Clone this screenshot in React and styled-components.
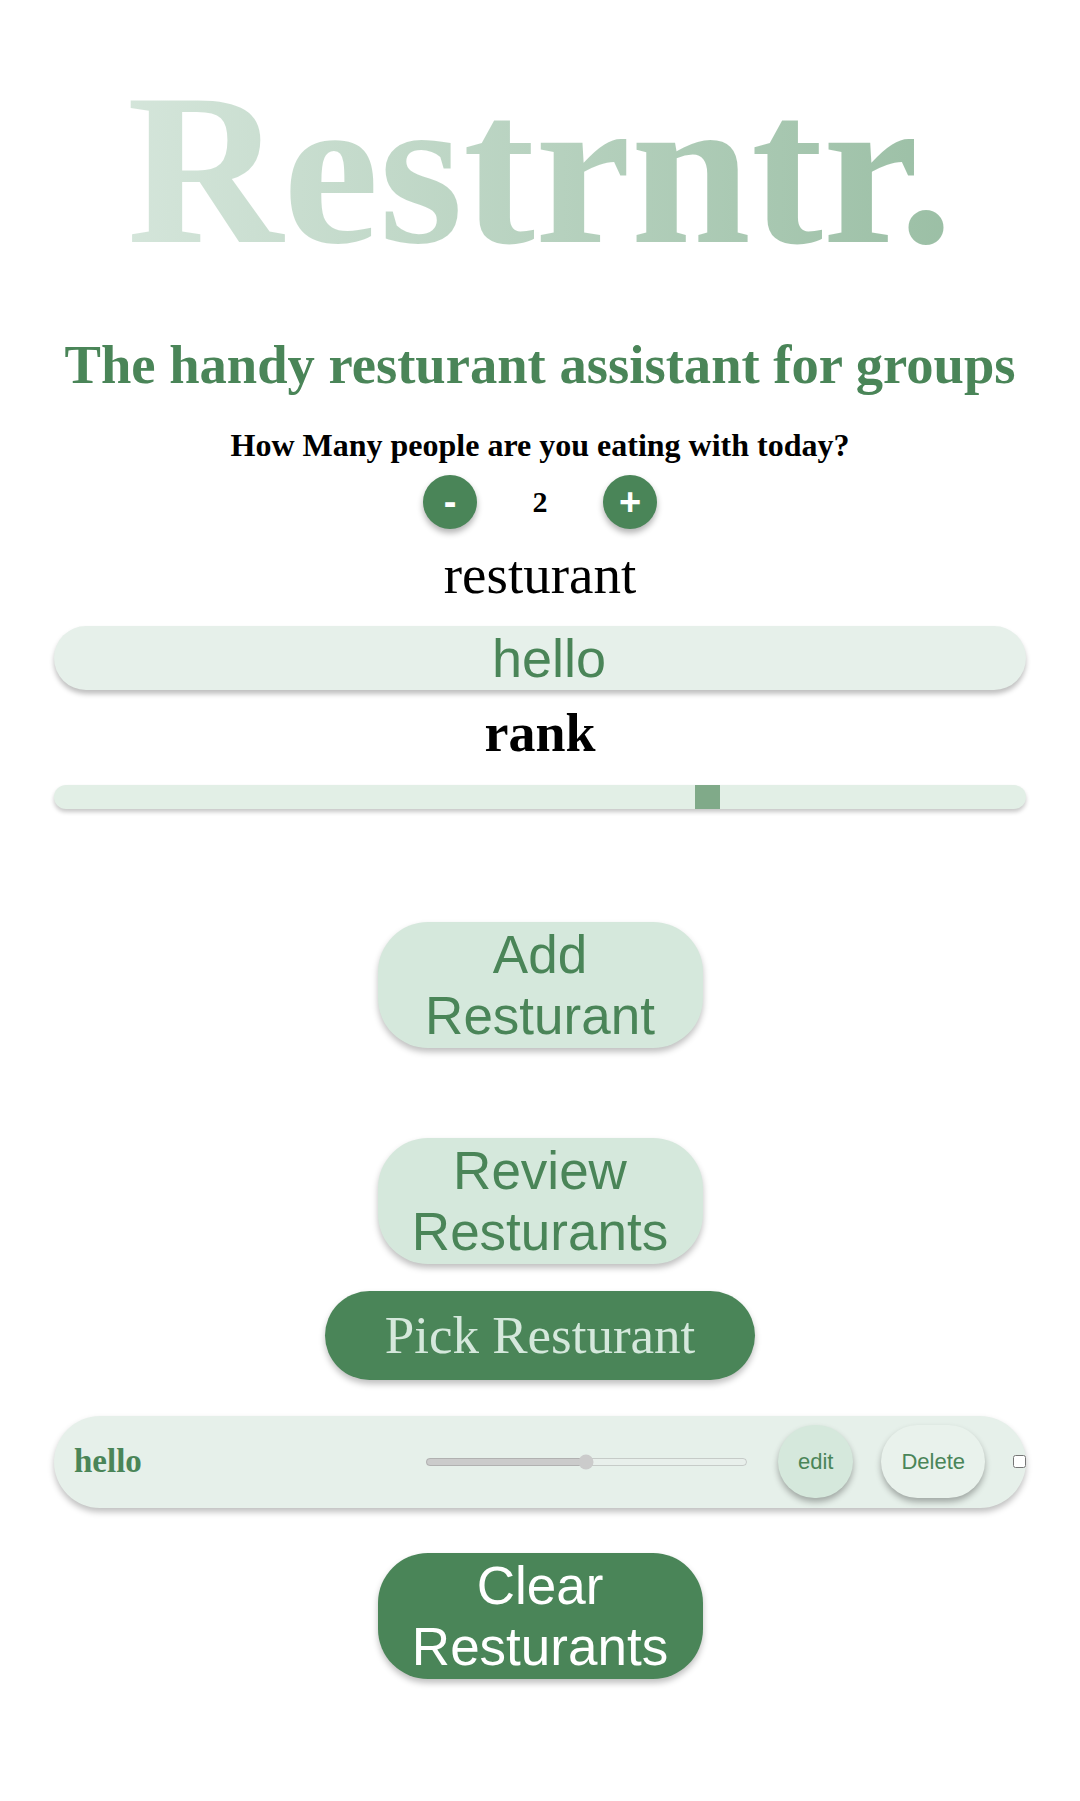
import React from "react";
import styled, { createGlobalStyle } from "styled-components";

const GREEN = "#4a8558";
const MINT = "#d5e8dc";
const PALE = "#e6f0ea";

const GlobalStyle = createGlobalStyle`
  html, body {
    margin: 0;
    padding: 0;
    background: #ffffff;
  }
  body {
    font-family: "Liberation Serif", "Times New Roman", serif;
    color: #000;
  }
`;

export default function App() {
  return (
    <>
      <GlobalStyle />
      <Page>
        <Brand>Restrntr.</Brand>
        <Tagline>The handy resturant assistant for groups</Tagline>
        <Question>How Many people are you eating with today?</Question>
        <Counter>
          <RoundButton>-</RoundButton>
          <Count>2</Count>
          <RoundButton>+</RoundButton>
        </Counter>
        <FieldLabel>resturant</FieldLabel>
        <NameInput defaultValue="hello" />
        <FieldLabel $bold>rank</FieldLabel>
        <RankSlider type="range" min="0" max="10" step="0.01" defaultValue="6.77" />
        <PillButton $gap={113}>Add Resturant</PillButton>
        <PillButton $gap={90}>Review Resturants</PillButton>
        <PickButton>Pick Resturant</PickButton>
        <Card>
          <CardName>hello</CardName>
          <CardRange type="range" min="0" max="10" defaultValue="5" disabled />
          <SmallButton>edit</SmallButton>
          <SmallButton $light>Delete</SmallButton>
          <CardCheck type="checkbox" />
        </Card>
        <PillButton $gap={45} $dark>Clear Resturants</PillButton>
        <Spacer />
      </Page>
    </>
  );
}

const Page = styled.main`
  width: 90%;
  margin: 0 auto;
  display: flex;
  flex-direction: column;
  align-items: center;
`;

const Brand = styled.h1`
  margin: 62px 0 0;
  font-size: 216px;
  line-height: 1;
  font-weight: 700;
  background: linear-gradient(to right, #d4e5da, #9bbfa5);
  -webkit-background-clip: text;
  background-clip: text;
  color: transparent;
`;

const Tagline = styled.h2`
  margin: 56px 0 0;
  font-size: 54.6px;
  line-height: 1.15;
  font-weight: 700;
  color: ${GREEN};
  white-space: nowrap;
`;

const Question = styled.p`
  margin: 30px 0 0;
  font-size: 32px;
  line-height: 1.15;
  font-weight: 700;
`;

const Counter = styled.div`
  margin-top: 11px;
  display: flex;
  align-items: center;
  gap: 53px;
`;

const RoundButton = styled.button`
  width: 54px;
  height: 54px;
  padding: 0;
  border: none;
  border-radius: 50%;
  background: ${GREEN};
  color: #fff;
  font-family: "Liberation Sans", Arial, sans-serif;
  font-size: 38px;
  font-weight: 700;
  line-height: 1;
  box-shadow: 0 4px 6px rgba(0, 0, 0, 0.3);
`;

const Count = styled.span`
  min-width: 20px;
  text-align: center;
  font-size: 30px;
  font-weight: 700;
`;

const FieldLabel = styled.label`
  margin-top: ${(p) => (p.$bold ? 12 : 14)}px;
  font-size: ${(p) => (p.$bold ? 54 : 55)}px;
  line-height: 1.15;
  font-weight: ${(p) => (p.$bold ? 700 : 400)};
`;

const NameInput = styled.input`
  box-sizing: border-box;
  margin-top: 20px;
  width: 100%;
  height: 64px;
  padding: 0 20px 0 38px;
  border: none;
  outline: none;
  border-radius: 32px;
  background: ${PALE};
  color: ${GREEN};
  text-align: center;
  font-family: "Liberation Sans", Arial, sans-serif;
  font-size: 54px;
  box-shadow: 0 4px 5px rgba(0, 0, 0, 0.25);
`;

const RankSlider = styled.input`
  -webkit-appearance: none;
  appearance: none;
  margin: 21px 0 0;
  width: 100%;
  height: 24px;
  border-radius: 12px;
  background: #e2efe6;
  box-shadow: 0 3px 4px rgba(0, 0, 0, 0.22);
  outline: none;

  &::-webkit-slider-thumb {
    -webkit-appearance: none;
    appearance: none;
    width: 25px;
    height: 24px;
    background: #80aa89;
    border: none;
    border-radius: 0;
  }
`;

const PillButton = styled.button`
  margin-top: ${(p) => p.$gap}px;
  width: 325px;
  padding: 2px 0;
  border: none;
  border-radius: 50px;
  background: ${(p) => (p.$dark ? GREEN : MINT)};
  color: ${(p) => (p.$dark ? "#ffffff" : GREEN)};
  font-family: "Liberation Sans", Arial, sans-serif;
  font-size: 53px;
  line-height: normal;
  box-shadow: 0 4px 6px rgba(0, 0, 0, 0.25);
`;

const PickButton = styled.button`
  margin-top: 27px;
  padding: 14px 60px;
  border: none;
  border-radius: 45px;
  background: ${GREEN};
  color: ${MINT};
  font-family: "Liberation Serif", "Times New Roman", serif;
  font-size: 53px;
  line-height: 1.15;
  box-shadow: 0 4px 6px rgba(0, 0, 0, 0.25);
`;

const Card = styled.div`
  box-sizing: border-box;
  margin-top: 36px;
  width: 100%;
  height: 92px;
  padding: 0 0 0 20px;
  display: flex;
  align-items: center;
  gap: 28px;
  border-radius: 46px;
  background: ${PALE};
  box-shadow: 0 4px 6px rgba(0, 0, 0, 0.25);
`;

const CardName = styled.span`
  flex: 1;
  font-size: 33px;
  font-weight: 700;
  color: ${GREEN};
`;

const CardRange = styled.input`
  width: 323px;
  margin: 0 2px 0 0;
`;

const SmallButton = styled.button`
  height: 73px;
  padding: 0 20px;
  border: none;
  border-radius: 40px;
  background: ${(p) => (p.$light ? "#e9f2ec" : MINT)};
  color: ${GREEN};
  font-family: "Liberation Sans", Arial, sans-serif;
  font-size: 22px;
  box-shadow: 0 4px 6px rgba(0, 0, 0, 0.3);
`;

const CardCheck = styled.input`
  width: 13px;
  height: 13px;
  margin: 0;
`;

const Spacer = styled.div`
  height: 123px;
`;
